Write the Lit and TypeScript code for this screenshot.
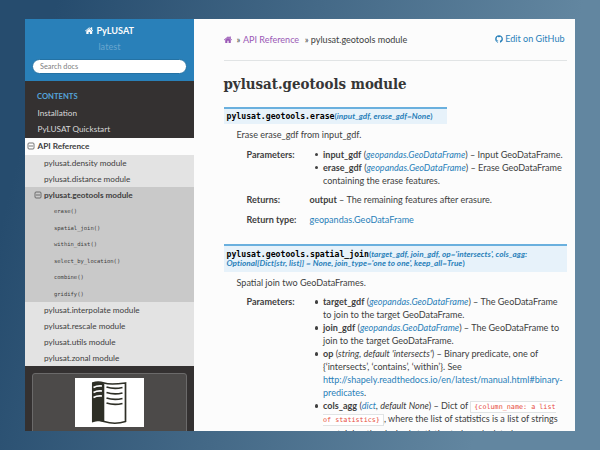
import { LitElement, html, css, svg } from "lit";
import { customElement } from "lit/decorators.js";

const homeIcon = html`<svg class="home" viewBox="0 0 26 22" aria-hidden="true">
  <path d="M13 5.6 4 13v8.2c0 .5.3.8.8.8H11v-6.6h4V22h6.200c.5 0 .8-.3.8-.8V13z" fill="currentColor"/>
  <path d="M25.600 11.200 22 8.200V1.600c0-.4-.2-.6-.6-.6h-3c-.4 0-.6.2-.6.6v3.100L14.600 2c-.9-.8-2.300-.8-3.200 0L.4 11.200c-.3.2-.3.600-.1.900l1 1.200c.2.200.6.300.8 0L13 4.200l10.900 9.100c.2.300.600.200.8 0l1-1.200c.2-.3.200-.7-.1-.9z" fill="currentColor"/>
</svg>`;

const githubIcon = html`<svg class="github" viewBox="0 0 24 24" aria-hidden="true">
  <path fill="currentColor" d="M12 .5C5.600.5.500 5.600.5 12c0 5.100 3.300 9.400 7.900 10.900.6.100.8-.2.8-.6v-2.100c-3.200.7-3.900-1.400-3.900-1.400-.5-1.300-1.300-1.700-1.300-1.700-1-.7.1-.7.1-.7 1.200.1 1.800 1.200 1.800 1.200 1 1.800 2.700 1.300 3.400 1 .1-.8.4-1.300.7-1.500-2.600-.3-5.200-1.300-5.200-5.700 0-1.300.4-2.300 1.200-3.100-.1-.3-.5-1.500.1-3.100 0 0 1-.3 3.200 1.200a11 11 0 0 1 5.800 0C17.300 4.900 18.300 5.200 18.300 5.200c.6 1.600.2 2.800.1 3.100.7.800 1.200 1.800 1.200 3.100 0 4.400-2.700 5.400-5.300 5.700.4.400.8 1.100.8 2.200v3.100c0 .3.200.7.8.6 4.600-1.500 7.900-5.800 7.900-10.900C23.500 5.600 18.400.5 12 .5z"/>
</svg>`;

const minusBox = html`<svg class="minus" viewBox="0 0 8 8" aria-hidden="true">
  <rect x="1" y="1" width="6" height="6" rx="1" fill="none" stroke="currentColor" stroke-width=".8"/>
  <path d="M2 4h4" stroke="currentColor" stroke-width=".8"/>
</svg>`;

const bookLogo = html`<svg class="book" viewBox="0 0 69 49" aria-hidden="true">
  <rect width="69" height="49" fill="#fff"/>
  <path d="M17 5Q22 3 29.300 5.500V43.500Q23 42 17 44.500z" fill="#2e2f26"/>
  <path d="M17.800 5Q23 3 29 5T50.500 5V43.500Q40 47 29 43.500T17.800 44z" fill="none" stroke="#2e2f26" stroke-width="1.700"/>
  <g fill="none" stroke="#fff" stroke-width="1.600">
    ${[9.5, 14.5, 19.500].map((y) => svg`<path d="M18.500 ${y}q3.500-2 8.500-1.500"/>`)}
  </g>
  <g fill="none" stroke="#2e2f26" stroke-width="1.700">
    ${[9, 14.500, 20, 25].map((y) => svg`<path d="M31.500 ${y}q7.500 2.500 16 .5"/>`)}
  </g>
</svg>`;

@customElement("app-root")
export class AppRoot extends LitElement {
  static styles = css`
    :host {
      display: block;
      box-sizing: border-box;
      width: 600px;
      height: 450px;
      padding: 19px 25px;
      overflow: hidden;
      background: linear-gradient(104deg, #264c6e 8%, #6286a0 82%);
      font-family: Lato, sans-serif;
      font-size: 9.060px;
      color: #404040;
    }
    * { box-sizing: border-box; }
    svg { display: inline-block; flex: none; }
    .window { display: flex; width: 550px; height: 412px; overflow: hidden; background: #fcfcfc; }
    .side { width: 169px; flex: none; background: #343131; font-size: 8.200px; }
    .search { height: 62px; background: #2980b9; display: flex; flex-direction: column; align-items: center; }
    .brand { display: flex; align-items: center; gap: 3px; height: 13px; margin-top: 5px; color: #fcfcfc; font-weight: 700; font-size: 9.100px; }
    .brand .home { width: 8.500px; height: 7.200px; }
    .version { height: 13px; line-height: 13px; margin-top: 3px; color: #69a6ce; font-size: 9px; letter-spacing: .1px; }
    .field { width: 155px; height: 15px; margin-top: 6px; padding-left: 7px; border: 1px solid #2472a4; border-radius: 8px; background: #fff; line-height: 13px; font-size: 7.300px; color: #808080; }
    .caption { height: 24px; padding: 9px 0 0 12px; line-height: 13px; font-size: 7.650px; font-weight: 700; color: #55a5d9; }
    .item { display: flex; align-items: center; height: 16.150px; padding-left: 12.500px; white-space: nowrap; }
    .top { color: #d9d9d9; }
    .current { height: 17px; padding-left: 2px; gap: 2.500px; background: #fcfcfc; font-weight: 700; }
    .minus { width: 8px; height: 8px; color: #555; }
    .sub { padding-left: 19px; background: #e3e3e3; }
    .subcurrent { background: #c9c9c9; padding-left: 8.500px; gap: 2.500px; font-weight: 700; }
    .fn { height: 16.500px; padding-left: 29px; background: #c9c9c9; font-family: "DejaVu Sans Mono", monospace; font-size: 5.500px; }
    .top-list { height: 32.500px; }
    .promo { height: 100px; margin: 7px; padding-top: 4px; display: flex; justify-content: center; border: 1px solid #6b6a6a; border-radius: 3px; background: #4c4a49; }
    .book { width: 69px; height: 49px; }
    .main { flex: 1; min-width: 0; padding: 0 8px 0 29.500px; }
    .bar { display: flex; justify-content: space-between; height: 42px; padding: 13px 2.500px 0 0; border-bottom: 1px solid #e1e4e5; line-height: 15px; }
    .crumbs { display: flex; }
    .crumbs .home { width: 8px; height: 7px; margin: 4px 5px 0 0; color: #9b59b6; }
    .visited { color: #9b59b6; margin: 0 5.500px 0 2.500px; }
    .edit { display: flex; gap: 2.500px; line-height: 13px; color: #2980b9; }
    .github { width: 8px; height: 8px; margin-top: 2.500px; }
    h1 { margin: 0; height: 45.500px; padding-top: 12px; font: 700 14.900px/22px "Roboto Slab", "DejaVu Serif Condensed", "DejaVu Serif", serif; white-space: nowrap; color: #363636; }
    .sig { width: fit-content; border-top: 2px solid #6ab0de; background: #e7f2fa; padding: 2px 15px 2px 3px; color: #2980b9; font-weight: 700; font-size: 8.150px; line-height: 9.600px; white-space: nowrap; }
    .sig i { letter-spacing: .05px; }
    .first { height: 17.500px; padding-top: 3.500px; }
    .second { width: 343.500px; height: 27.500px; margin-top: 18.500px; padding-top: 3.500px; }
    code { font-family: "DejaVu Sans Mono", monospace; }
    .sig code { color: #000; font-size: 8.160px; }
    .desc { margin-left: 13px; height: 23.500px; padding-top: 4px; line-height: 13px; }
    .grid { display: grid; grid-template-columns: 63px 1fr; margin-left: 23px; line-height: 13px; row-gap: 6.700px; white-space: nowrap; }
    .grid dt { font-weight: 700; }
    dl, dt, dd, ul { margin: 0; padding: 0; }
    ul { padding-left: 13.500px; list-style: none; }
    li { position: relative; }
    li::before { content: ""; position: absolute; left: -8px; top: 5px; width: 3.400px; height: 3.400px; border-radius: 50%; background: #404040; }
    .line { height: 13px; }
    .codeline { height: 14.500px; line-height: 14.500px; }
    .link { color: #2980b9; }
    .chip { font-size: 6.750px; color: #e74c3c; background: #fff; border: 1px solid #e1e4e5; padding: 1px 3px; }
    .open { border-right: 0; padding-right: 0; }
    .close { border-left: 0; padding-left: 0; }
  `;

  render() {
    const gdf = html`<i class="link">geopandas.GeoDataFrame</i>`;
    return html`
      <div class="window">
        <nav class="side">
          <div class="search">
            <div class="brand">${homeIcon}<span>PyLUSAT</span></div>
            <div class="version">latest</div>
            <div class="field">Search docs</div>
          </div>
          <div class="caption">CONTENTS</div>
          <div class="top-list">
            <div class="item top">Installation</div>
            <div class="item top">PyLUSAT Quickstart</div>
          </div>
          <div class="item current">${minusBox}<span>API Reference</span></div>
          ${["density", "distance"].map((m) => html`<div class="item sub">pylusat.${m} module</div>`)}
          <div class="item subcurrent">${minusBox}<span>pylusat.geotools module</span></div>
          ${["erase", "spatial_join", "within_dist", "select_by_location", "combine", "gridify"].map(
            (f) => html`<div class="item fn">${f}()</div>`
          )}
          ${["interpolate", "rescale", "utils", "zonal"].map((m) => html`<div class="item sub">pylusat.${m} module</div>`)}
          <div class="promo">${bookLogo}</div>
        </nav>
        <main class="main">
          <div class="bar">
            <div class="crumbs">${homeIcon}<span>»</span><span class="visited">API Reference</span><span>» pylusat.geotools module</span></div>
            <div class="edit">${githubIcon}<span>Edit on GitHub</span></div>
          </div>
          <h1>pylusat.geotools module</h1>
          <div class="sig first"><code>pylusat.geotools.erase</code>(<i>input_gdf, erase_gdf=None</i>)</div>
          <div class="desc">Erase erase_gdf from input_gdf.</div>
          <dl class="grid">
            <dt>Parameters:</dt>
            <dd><ul>
              <li><div class="line"><b>input_gdf</b> (${gdf}) – Input GeoDataFrame.</div></li>
              <li><div class="line"><b>erase_gdf</b> (${gdf}) – Erase GeoDataFrame</div><div class="line">containing the erase features.</div></li>
            </ul></dd>
            <dt>Returns:</dt>
            <dd><b>output</b> – The remaining features after erasure.</dd>
            <dt>Return type:</dt>
            <dd class="link">geopandas.GeoDataFrame</dd>
          </dl>
          <div class="sig second"><code>pylusat.geotools.spatial_join</code>(<i>target_gdf, join_gdf, op='intersects', cols_agg:<br>Optional[Dict[str, list]] = None, join_type='one to one', keep_all=True</i>)</div>
          <div class="desc">Spatial join two GeoDataFrames.</div>
          <dl class="grid">
            <dt>Parameters:</dt>
            <dd><ul>
              <li><div class="line"><b>target_gdf</b> (${gdf}) – The GeoDataFrame</div><div class="line">to join to the target GeoDataFrame.</div></li>
              <li><div class="line"><b>join_gdf</b> (${gdf}) – The GeoDataFrame to</div><div class="line">join to the target GeoDataFrame.</div></li>
              <li><div class="line"><b>op</b> (<i>string, default 'intersects'</i>) – Binary predicate, one of</div><div class="line">{‘intersects’, ‘contains’, ‘within’}. See</div><div class="line link">http://shapely.readthedocs.io/en/latest/manual.html#binary-</div><div class="line"><span class="link">predicates</span>.</div></li>
              <li><div class="line"><b>cols_agg</b> (<i><span class="link">dict</span>, default None</i>) – Dict of <code class="chip open">{column_name: a list</code></div><div class="codeline"><code class="chip close">of statistics}</code>, where the list of statistics is a list of strings</div><div class="line">containing the desired statistics to be calculated.</div></li>
            </ul></dd>
          </dl>
        </main>
      </div>
    `;
  }
}
